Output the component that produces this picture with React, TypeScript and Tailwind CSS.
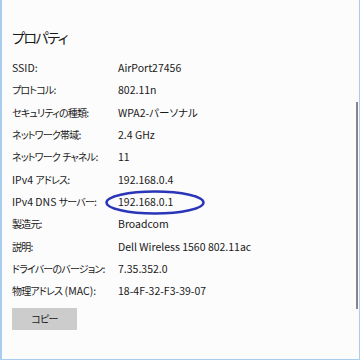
const rows: [string, string][] = [
  ['SSID:', 'AirPort27456'],
  ['プロトコル:', '802.11n'],
  ['セキュリティの種類:', 'WPA2-パーソナル'],
  ['ネットワーク帯域:', '2.4 GHz'],
  ['ネットワーク チャネル:', '11'],
  ['IPv4 アドレス:', '192.168.0.4'],
  ['IPv4 DNS サーバー:', '192.168.0.1'],
  ['製造元:', 'Broadcom'],
  ['説明:', 'Dell Wireless 1560 802.11ac'],
  ['ドライバーのバージョン:', '7.35.352.0'],
  ['物理アドレス (MAC):', '18-4F-32-F3-39-07'],
];

// latin runs keep normal spacing, kana get squeezed a bit
function Label({ text }: { text: string }) {
  const parts = text.match(/[\x20-\x7e]+|[^\x20-\x7e]+/g) ?? [];
  return (
    <span className="whitespace-nowrap">
      {parts.map((p, i) =>
        /^[\x20-\x7e]+$/.test(p) ? (
          <span key={i} className="text-[10.5px]">{p}</span>
        ) : (
          <span key={i} className="text-[10px] tracking-[-0.8px]">{p}</span>
        )
      )}
    </span>
  );
}

export default function App() {
  return (
    <div
      className="relative w-[360px] h-[360px] bg-[#fcfcfc] border-l-2 border-r border-b border-[#a9cdef] text-[#1a1a1a] overflow-hidden [font-feature-settings:'palt']"
      style={{ fontFamily: '"Noto Sans CJK JP", "Noto Sans", sans-serif' }}
    >
      <div className="pl-[10px] pt-[26px]">
        <h1 className="text-[14px] leading-[22px] font-normal tracking-[-1.5px]">プロパティ</h1>
        <div className="mt-[9px] grid grid-cols-[106px_1fr] auto-rows-[22.3px] items-center text-[10.5px] leading-[14px]">
          {rows.map(([label, value]) => (
            <div key={label} className="contents">
              <Label text={label} />
              <span className="whitespace-nowrap">{value}</span>
            </div>
          ))}
        </div>
        <button className="mt-[6px] w-[65px] h-[22px] bg-[#cccccc] text-[10px] tracking-[-0.8px] leading-none">
          コピー
        </button>
      </div>

      {/* scrollbar */}
      <div className="absolute right-[1px] top-[102px] w-[2px] h-[207px] bg-[#858585]" />

      {/* highlight */}
      <svg className="absolute left-[102px] top-[189px]" width="102" height="27" viewBox="0 0 102 27">
        <ellipse cx="51" cy="13.5" rx="48.5" ry="11" fill="none" stroke="#2a35b8" strokeWidth="2.5" />
      </svg>
    </div>
  );
}
